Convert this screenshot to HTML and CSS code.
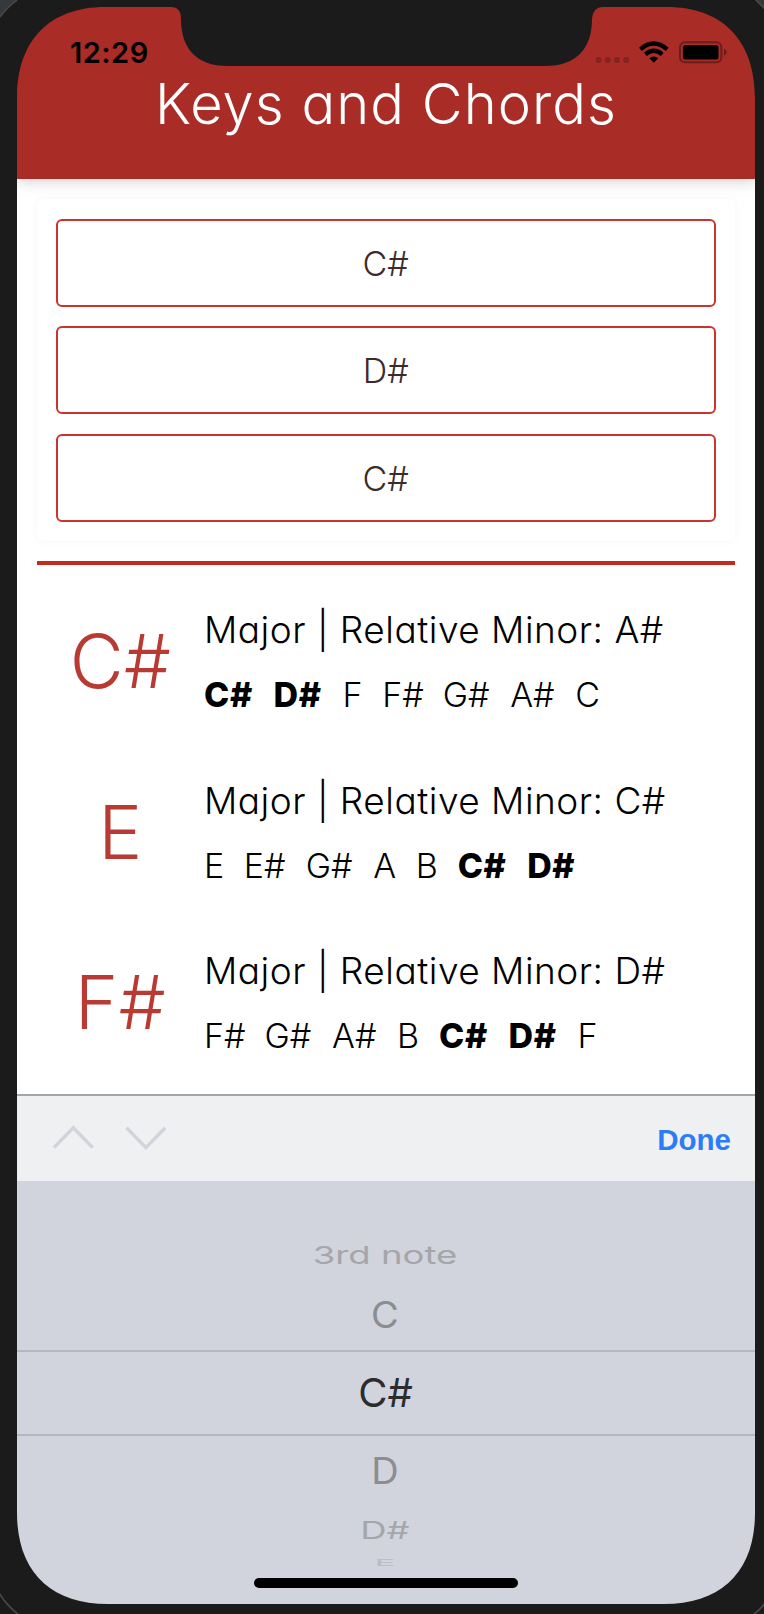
FILE: index.html
```html
<!DOCTYPE html>
<html lang="en">
<head>
<meta charset="utf-8">
<title>Keys and Chords</title>
<link rel="stylesheet" href="styles.css">
</head>
<body>
<div class="device">
  <div class="screen">
    <header class="header">
      <div class="status">
        <span class="time">12:29</span>
        <svg class="indicators" width="130" height="24" viewBox="0 0 130 24">
          <g fill="#87221e"><rect x="0.6" y="16" width="6" height="6" rx="2.5"/><rect x="9.8" y="16" width="6" height="6" rx="2.5"/><rect x="19" y="16" width="6" height="6" rx="2.5"/><rect x="28.2" y="16" width="6" height="6" rx="2.5"/></g>
          <g fill="none" stroke="#000" stroke-width="4.2"><path d="M45.4 8.3 Q58.8 -3.3 72.2 8.3"/><path d="M50.4 13.4 Q58.8 6.2 67.2 13.4"/></g>
          <path d="M54.4 17.2 Q58.8 13.8 63.2 17.2 L58.8 21.8 Z"/>
          <rect x="85" y="1.2" width="41.4" height="20" rx="5" fill="none" stroke="#6d1d19" stroke-width="2"/>
          <rect x="87.9" y="4" width="35.6" height="14.6" rx="2.6"/>
          <path d="M129 7.5 Q131.6 9 131.6 11.2 T129 15 Z" fill="#6d1d19"/>
        </svg>
      </div>
      <h1 class="title">Keys and Chords</h1>
    </header>
    <main class="content">
      <section class="selectors">
        <div class="select">C#</div>
        <div class="select">D#</div>
        <div class="select">C#</div>
      </section>
      <section class="results">
        <article class="key">
          <div class="root">C#</div>
          <div class="info">
            <p class="relation">Major | Relative Minor: A#</p>
            <p class="notes"><b class="w-csb">C#</b><b class="w-dsb">D#</b><span class="w-f">F</span><span class="w-fs">F#</span><span class="w-gs">G#</span><span class="w-as">A#</span><span>C</span></p>
          </div>
        </article>
        <article class="key">
          <div class="root">E</div>
          <div class="info">
            <p class="relation">Major | Relative Minor: C#</p>
            <p class="notes"><span class="w-f">E</span><span class="w-es">E#</span><span class="w-gs">G#</span><span class="w-a">A</span><span class="w-b">B</span><b class="w-csb">C#</b><b>D#</b></p>
          </div>
        </article>
        <article class="key">
          <div class="root">F#</div>
          <div class="info">
            <p class="relation">Major | Relative Minor: D#</p>
            <p class="notes"><span class="w-fs">F#</span><span class="w-gs">G#</span><span class="w-as">A#</span><span class="w-b">B</span><b class="w-csb">C#</b><b class="w-dsb">D#</b><span>F</span></p>
          </div>
        </article>
      </section>
    </main>
    <div class="toolbar">
      <svg width="114" height="26" viewBox="0 0 114 26" fill="none" stroke="#d2d3db" stroke-width="3.4"><path d="M1.9 22.6 L21.3 2.8 L40.7 22.6"/><path d="M74.5 2.8 L93.9 22.6 L113.3 2.8"/></svg>
      <span class="done">Done</span>
    </div>
    <div class="picker">
      <div class="option far"><span>3rd note</span></div>
      <div class="option near"><span>C</span></div>
      <div class="option chosen"><span>C#</span></div>
      <div class="option near below"><span>D</span></div>
      <div class="option far below"><span>D#</span></div>
      <div class="option edge"><span>E</span></div>
      <div class="home"></div>
    </div>
  </div>
  <svg class="bezel" width="764" height="1614" viewBox="0 0 764 1614">
    <path fill="#1b1b1b" fill-rule="evenodd" d="M0 0H764V1614H0Z M17 98 C17 40 50 7 105 7 H171 Q181 7 181 19 C181 48 196 66 228 66 H545 C577 66 592 48 592 19 Q593 7 603 7 H667 C722 7 755 40 755 98 V1513 C755 1571 722 1604 664 1604 H108 C50 1604 17 1571 17 1513 Z"/>
    <path fill="#35393c" d="M0 0H16Q7 6 0 16Z M756 0H764V8Z"/>
    <g fill="none" stroke="#484848" stroke-width="1.6"><path d="M0 17Q7 7 17 0"/><path d="M755 -1L765 9"/><path d="M-1 1593Q7 1606 19 1615"/><path d="M753 1615Q760 1610 765 1603"/></g>
  </svg>
</div>
</body>
</html>
```
FILE: styles.css
```css
* { box-sizing: border-box; }
body { margin: 0; background: #1b1b1b; font-family: Inter, "Open Sans", sans-serif; }
h1, p { margin: 0; font-weight: 300; }
.device { position: relative; width: 764px; height: 1614px; padding: 7px 9px 10px 17px; overflow: hidden; }
.screen { display: flex; flex-direction: column; width: 738px; height: 1597px; background: #fff; }
.bezel { position: absolute; top: 0; left: 0; }

.header { height: 172px; flex: none; background: #a92c27; box-shadow: 0 1px 14px rgba(60, 30, 40, .25); padding-top: 33px; font-feature-settings: "cv11"; }
.status { display: flex; justify-content: space-between; height: 24px; padding: 0 30px 0 53px; }
.time { font-size: 29px; line-height: 25px; font-weight: 600; letter-spacing: .5px; }
.indicators { margin-top: 1px; overflow: visible; }
.title { margin-top: 10px; height: 60px; line-height: 60px; font-size: 56px; letter-spacing: 1.05px; text-align: center; color: #fff; white-space: nowrap; }

.content { height: 915px; flex: none; padding: 20px; overflow: hidden; }
.selectors { display: flex; flex-direction: column; gap: 19.5px; height: 342px; padding: 19.5px 19.5px 0 19px; border-radius: 6px; box-shadow: 0 0 8px rgba(0, 0, 0, .04); }
.select { height: 88px; border: 2px solid #c9342d; border-radius: 6px; text-align: center; font-size: 34px; line-height: 85px; font-weight: 300; color: #3d2b29; }
.results { margin-top: 20px; border-top: 4px solid #c52a20; padding-top: 29px; }
.key { display: flex; height: 170.5px; padding-top: 17px; font-feature-settings: "cv11"; }
.root { width: 167px; text-align: center; font-size: 74px; font-weight: 350; letter-spacing: .5px; line-height: 100px; color: #b83a33; }
.info { display: flex; flex-direction: column; gap: 20px; color: #000; white-space: nowrap; }
.relation { font-size: 37px; line-height: 37px; height: 42px; letter-spacing: .5px; }
.notes { display: flex; font-size: 34px; line-height: 44px; }
.notes b { font-weight: 800; letter-spacing: .6px; }
.w-csb { width: 69.5px; } .w-dsb { width: 69px; } .w-f { width: 39.7px; } .w-fs { width: 60.5px; }
.w-es { width: 62px; } .w-gs { width: 67.5px; } .w-as { width: 65px; } .w-a { width: 42.5px; } .w-b { width: 42px; }

.toolbar { display: flex; justify-content: space-between; align-items: center; height: 87px; flex: none; padding: 0 24px 2px 35px; border-top: 2px solid #a4a5a9; background: #eff0f2; }
.done { font: bold 29.5px "Liberation Sans", Arial, sans-serif; color: #2c7cf6; padding-top: 4px; }
.picker { position: relative; flex: 1; display: flex; flex-direction: column; padding-top: 50px; background: #d1d4dc; font-size: 40px; text-align: center; }
.option { display: flex; align-items: center; justify-content: center; width: 736px; flex: none; color: #2b2c2e; }
.option span { white-space: nowrap; margin-top: -2px; }
.far { height: 49px; color: #a4a6aa; }
.far span { font-size: 36.5px; transform: scaleY(.68); }
.near { height: 70px; color: #8c8d91; }
.near span { font-size: 38px; margin-top: 0; transform: scaleY(.95); }
.chosen { width: 738px; height: 86px; padding-right: 1px; border: solid #b5b8be; border-width: 2px 0; }
.below.near { height: 69px; }
.below.far { height: 51px; }
.edge { height: 14px; color: #b9bcc4; }
.edge span { font-size: 35px; margin-top: 0; transform: scaleY(.24); }
.home { position: absolute; left: 237px; bottom: 16px; width: 264px; height: 10px; border-radius: 5px; background: #000; }
```
